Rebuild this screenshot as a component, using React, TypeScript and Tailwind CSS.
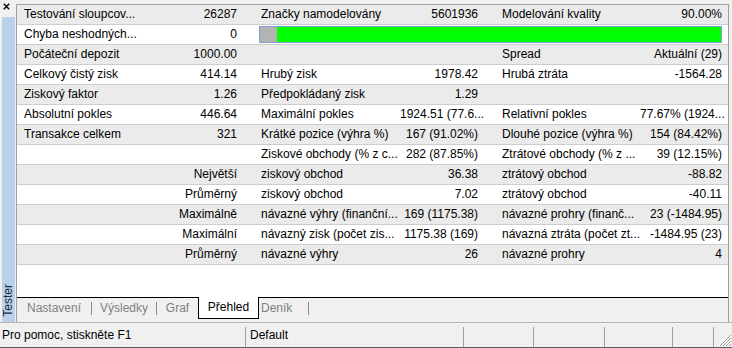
import React from "react";

type Row = [string, string, string, string, string, string] | "progress";

const rows: Row[] = [
  ["Testování sloupcov...", "26287", "Značky namodelovány", "5601936", "Modelování kvality", "90.00%"],
  "progress",
  ["Počáteční depozit", "1000.00", "", "", "Spread", "Aktuální (29)"],
  ["Celkový čistý zisk", "414.14", "Hrubý zisk", "1978.42", "Hrubá ztráta", "-1564.28"],
  ["Ziskový faktor", "1.26", "Předpokládaný zisk", "1.29", "", ""],
  ["Absolutní pokles", "446.64", "Maximální pokles", "1924.51 (77.6...", "Relativní pokles", "77.67% (1924..."],
  ["Transakce celkem", "321", "Krátké pozice (výhra %)", "167 (91.02%)", "Dlouhé pozice (výhra %)", "154 (84.42%)"],
  ["", "", "Ziskové obchody (% z c...", "282 (87.85%)", "Ztrátové obchody (% z ...", "39 (12.15%)"],
  ["", "Největší", "ziskový obchod", "36.38", "ztrátový obchod", "-88.82"],
  ["", "Průměrný", "ziskový obchod", "7.02", "ztrátový obchod", "-40.11"],
  ["", "Maximálně", "návazné výhry (finanční...", "169 (1175.38)", "návazné prohry (finanč...", "23 (-1484.95)"],
  ["", "Maximální", "návazný zisk (počet zis...", "1175.38 (169)", "návazná ztráta (počet zt...", "-1484.95 (23)"],
  ["", "Průměrný", "návazné výhry", "26", "návazné prohry", "4"],
];

const cell = "whitespace-nowrap overflow-hidden leading-[19px] h-[19px]";

export default function App() {
  return (
    <div
      className="w-[732px] h-[348px] bg-[#f0f0f0] flex flex-col text-[12px] text-black overflow-hidden"
      style={{ fontFamily: '"Liberation Sans", Arial, sans-serif' }}
    >
      <div className="flex h-[322px]">
        {/* sidebar */}
        <div className="w-[16px] flex flex-col">
          <div className="h-[17px] pl-[3px] pt-[3px]">
            <svg width="7" height="7" viewBox="0 0 7 7">
              <path d="M0.8 0.8 L6.2 6.2 M6.2 0.8 L0.8 6.2" stroke="#111" strokeWidth="1.6" />
            </svg>
          </div>
          <div className="ml-[2px] w-[13px] flex-1 bg-[#b9d1ea] flex flex-col justify-end items-center pb-[5px]">
            <span className="[writing-mode:vertical-rl] rotate-180 text-[12px] leading-[13px] text-[#1b2a40]">
              Tester
            </span>
          </div>
        </div>

        {/* main panel */}
        <div className="w-[713px] mt-[4px] border-t border-r border-l border-[#a0a0a0] flex flex-col">
          <div className="flex-1 bg-white">
            {rows.map((r, i) => {
              const bg = i % 2 === 0 ? "bg-[#ebebeb]" : "bg-white";
              if (r === "progress") {
                return (
                  <div
                    key={i}
                    className={`grid grid-cols-[130px_97px_481px] h-[20px] border-b border-[#cdcdcd] ${bg}`}
                  >
                    <div className={`${cell} pl-[7px]`}>Chyba neshodných...</div>
                    <div className={`${cell} pr-[7px] text-right`}>0</div>
                    <div className="h-[19px] flex items-center pl-[15px] pr-[3px]">
                      <div className="h-[17px] w-full border border-[#7fa3cf] flex">
                        <div className="w-[17px] bg-[#b3b3b3]" />
                        <div className="flex-1 bg-[#00ff00]" />
                      </div>
                    </div>
                  </div>
                );
              }
              return (
                <div
                  key={i}
                  className={`grid grid-cols-[130px_97px_156px_85px_155px_88px] h-[20px] border-b border-[#cdcdcd] ${bg}`}
                >
                  <div className={`${cell} pl-[7px]`}>{r[0]}</div>
                  <div className={`${cell} pr-[7px] text-right`}>{r[1]}</div>
                  <div className={`${cell} pl-[17px]`}>{r[2]}</div>
                  <div className={`${cell} pr-[7px] text-right`}>{r[3]}</div>
                  <div className={`${cell} pl-[17px]`}>{r[4]}</div>
                  <div className={`${cell} pr-[6px] text-right`}>{r[5]}</div>
                </div>
              );
            })}
          </div>

          {/* tabs */}
          <div className="h-[25px] border-t border-black bg-[#f0f0f0] flex items-start text-[#808080]">
            <div className="w-[74px] h-[21px] leading-[21px] text-center">Nastavení</div>
            <div className="w-px h-[13px] mt-[4px] bg-[#8a8a8a]" />
            <div className="w-[64px] h-[21px] leading-[21px] text-center">Výsledky</div>
            <div className="w-px h-[13px] mt-[4px] bg-[#8a8a8a]" />
            <div className="w-[41px] h-[21px] leading-[21px] text-center">Graf</div>
            <div className="-mt-px w-[61px] h-[22px] bg-white border-x border-b border-black text-black leading-[20px] text-center">
              Přehled
            </div>
            <div className="w-[49px] h-[21px] leading-[21px] pl-[2px]">Deník</div>
            <div className="w-px h-[13px] mt-[4px] bg-[#8a8a8a]" />
          </div>
        </div>
      </div>

      {/* status bar */}
      <div className="h-[26px] border-t border-[#b4b4b4] border-b border-b-[#5a5a5a] flex items-stretch">
        <div className="w-[245px] pl-[2px] leading-[24px]">Pro pomoc, stiskněte F1</div>
        <div className="w-[218px] pl-[5px] leading-[24px] relative">
          <div className="absolute left-0 top-[4px] bottom-0 w-px bg-[#a0a0a0]" />
          Default
        </div>
        <div className="w-[70px] relative">
          <div className="absolute left-0 top-[4px] bottom-0 w-px bg-[#a0a0a0]" />
        </div>
        <div className="w-[71px] relative">
          <div className="absolute left-0 top-[4px] bottom-0 w-px bg-[#a0a0a0]" />
        </div>
        <div className="w-[68px] relative">
          <div className="absolute left-0 top-[4px] bottom-0 w-px bg-[#a0a0a0]" />
        </div>
        <div className="w-[41px] relative">
          <div className="absolute left-0 top-[4px] bottom-0 w-px bg-[#a0a0a0]" />
        </div>
        <div className="flex-1 relative">
          <div className="absolute left-0 top-[4px] bottom-0 w-px bg-[#a0a0a0]" />
          <svg className="absolute right-0 bottom-0" width="14" height="14" viewBox="0 0 14 14">
            <path d="M13 2 L2 13 M13 5 L5 13 M13 8 L8 13 M13 11 L11 13" stroke="#a0a0a0" strokeWidth="1" />
            <path d="M13 3 L3 13 M13 6 L6 13 M13 9 L9 13" stroke="#ffffff" strokeWidth="1" />
          </svg>
        </div>
      </div>
    </div>
  );
}
